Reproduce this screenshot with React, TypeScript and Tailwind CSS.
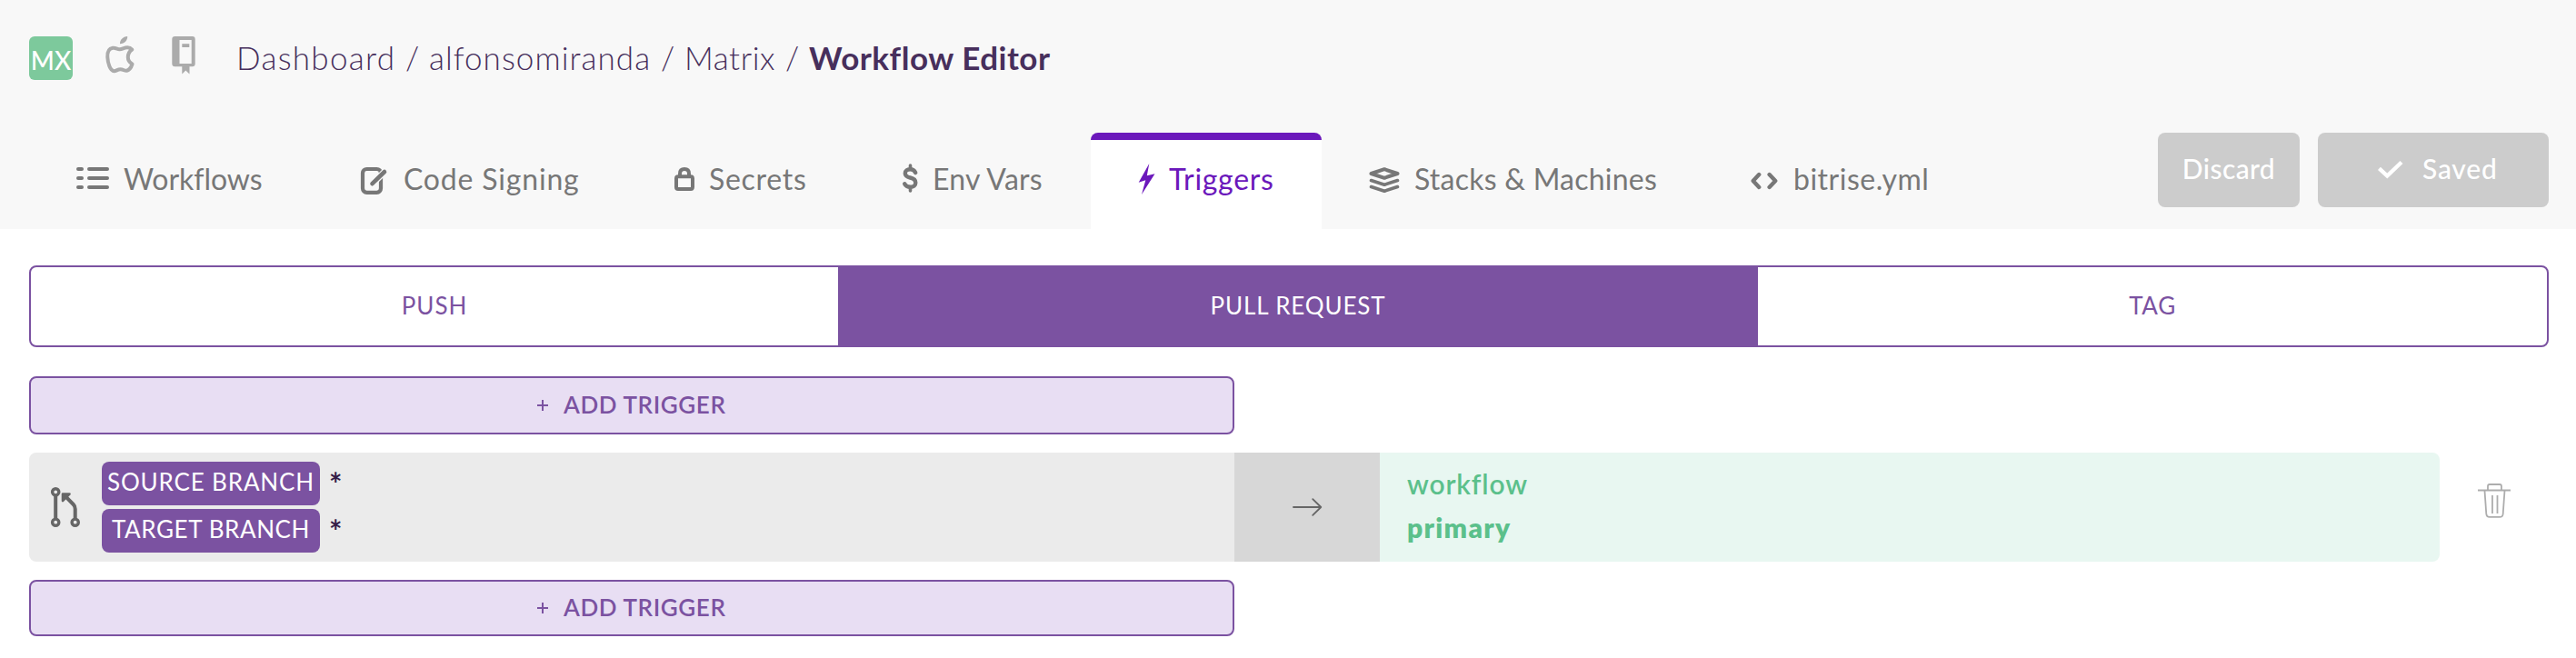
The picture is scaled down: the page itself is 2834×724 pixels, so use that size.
import type { ReactNode } from "react";

function TabIcon({ x, w, className, children }: { x: number; w: number; className: string; children: ReactNode }) {
  return (
    <svg
      viewBox={`${x} 176 ${w} 40`}
      className={"h-[40px] shrink-0 " + className}
      fill="none"
      stroke="currentColor"
      strokeWidth="4"
      strokeLinecap="round"
      strokeLinejoin="round"
    >
      {children}
    </svg>
  );
}

function Tab({ className, active = false, children }: { className: string; active?: boolean; children: ReactNode }) {
  const tone = active ? "rounded-t-lg border-[#6b18bb] bg-white text-[#6b18bb]" : "border-transparent text-[#777]";
  return (
    <a
      className={
        "flex h-[106px] shrink-0 items-center whitespace-nowrap border-t-8 pb-[14px] pl-[52px] text-[32px] leading-[40px] " +
        tone +
        " " +
        className
      }
    >
      {children}
    </a>
  );
}

function AddTrigger({ className }: { className: string }) {
  return (
    <button
      className={
        "flex w-[1326px] items-center rounded-lg border-2 border-[#7b52a1] bg-[#e8def3] pb-[2px] pl-[556px] text-[26px] text-[#7b52a1] " +
        className
      }
    >
      <svg viewBox="0 0 14 14" className="mt-[2px] size-[14px]" stroke="currentColor" strokeWidth="2">
        <path d="M1 7H13M7 1V13" />
      </svg>
      <span className="ml-[16px] font-semibold tracking-[0.6px]">ADD TRIGGER</span>
    </button>
  );
}

function BranchRow({ label, className }: { label: string; className: string }) {
  return (
    <div className="flex h-[48px] items-center">
      <span
        className={
          "flex h-[48px] w-[240px] items-center justify-center rounded-lg bg-[#7b52a1] pb-[3px] text-[26px] text-white " +
          className
        }
      >
        {label}
      </span>
      <span className="ml-[10px] text-[34px] font-bold leading-[48px] text-[#351d48]">*</span>
    </div>
  );
}

export default function App() {
  return (
    <div className="h-[724px] w-[2834px] overflow-hidden bg-white font-['Lato',sans-serif] [font-variant-ligatures:none]">
      <header className="h-[252px] bg-[#f8f8f8]">
        <div className="flex h-[146px] items-start pl-[32px] pt-[40px]">
          <div className="flex size-[48px] items-center justify-center rounded-md bg-[#7dc99c] pt-[3px] text-[28px] font-medium text-white">
            MX
          </div>
          <svg viewBox="112 40 40 48" className="ml-[32px] h-[48px] w-[40px]" fill="none" stroke="#ababab" strokeWidth="4" strokeLinejoin="round">
            <path d="M131.5 54.3C129 54 127 52.4 124 52.8C119.500 53.5 118 58 118.300 63C118.600 69 121 78 125.500 78.200C128 78.300 129 76.300 132.500 76.300C136 76.300 137 78.300 139.500 77.800C142.500 77 144.500 73.500 145.500 70.500C142.500 68.800 140.800 66.500 140.800 63C140.800 59.500 142.300 56.500 145.300 54.500C143.500 52.500 140.500 52 138 52.500C135.500 53 134 54.500 131.500 54.300Z" />
            <path d="M132 48.200C131.800 43.800 135 40.500 140.200 40C140.400 44.300 137 48 132 48.200Z" fill="#ababab" stroke="none" />
          </svg>
          <svg viewBox="184 40 36 48" className="ml-[32px] h-[48px] w-[36px]" fill="#ababab">
            <path
              fillRule="evenodd"
              d="M192.500 40H211.500Q214.700 40 214.700 43.200V70Q214.700 73.200 211.500 73.200H208.500V81.500L204.300 77.500L200.300 81.500V73.200H192.500Q189.300 73.200 189.300 70V43.200Q189.300 40 192.500 40ZM197.500 44V70H210.700V44Z"
            />
            <path d="M200.300 48.200H208.300V52H200.300Z" />
          </svg>
          <nav className="ml-[40px] flex whitespace-nowrap text-[35px] font-light leading-[46px] text-[#472f5c]">
            <span className="w-[186px] tracking-[1.3px]">Dashboard</span>
            <span className="w-[26px]">/</span>
            <span className="w-[255px] tracking-[1.05px]">alfonsomiranda</span>
            <span className="w-[26px]">/</span>
            <span className="w-[111px] tracking-[0.6px]">Matrix</span>
            <span className="w-[26px]">/</span>
            <span className="font-bold tracking-[0.52px]">Workflow Editor</span>
          </nav>
        </div>

        <div className="flex h-[106px] items-start pl-[32px]">
          <Tab className="w-[312px]">
            <TabIcon x={84} w={52} className="w-[52px]">
              <path d="M86 186H90M98 186H118M86 196H90M98 196H118M86 206H90M98 206H118" />
            </TabIcon>
            <span className="pt-[2px] tracking-[-0.04px]">Workflows</span>
          </Tab>
          <Tab className="w-[346px]">
            <TabIcon x={396} w={48} className="w-[48px]">
              <rect x="399" y="186" width="20" height="25.800" rx="4.500" strokeWidth="4.200" />
              <path d="M411.500 200.500L426 186" stroke="#f8f8f8" strokeWidth="7" strokeLinecap="butt" />
              <path d="M409.500 202.200L423 189" strokeWidth="4.600" />
            </TabIcon>
            <span className="pt-[2px] tracking-[0.81px]">Code Signing</span>
          </Tab>
          <Tab className="w-[250px]">
            <TabIcon x={742} w={38} className="w-[38px]">
              <rect x="744" y="194.300" width="18" height="13.700" rx="2" />
              <path d="M748 194V191C748 187.500 750 186 753 186C756 186 758 187.500 758 191V194" />
            </TabIcon>
            <span className="pt-[2px] tracking-[0.72px]">Secrets</span>
          </Tab>
          <Tab className="w-[260px]">
            <TabIcon x={992} w={34} className="w-[34px]">
              <path d="M1001.500 182V186M1001.500 206V210" strokeWidth="3.600" />
              <path d="M1007.200 190C1006 187.500 1004 186.300 1001.300 186.300C998 186.300 995.800 188 995.800 190.700C995.800 193.500 998 194.700 1001.300 195.500C1005 196.400 1007.300 197.800 1007.300 201C1007.300 204 1005 205.800 1001.500 205.800C998.500 205.800 996.300 204.600 995.200 202.300" strokeWidth="4.400" />
            </TabIcon>
            <span className="pt-[2px] tracking-[0.25px]">Env Vars</span>
          </Tab>
          <Tab active className="w-[254px]">
            <TabIcon x={1252} w={34} className="w-[34px]">
              <path d="M1264.300 180L1252.700 200.700L1260.300 198.300L1256 214L1270.500 191.200L1261.800 193.300Z" fill="currentColor" stroke="none" />
            </TabIcon>
            <span className="pt-[2px] tracking-[0.7px]">Triggers</span>
          </Tab>
          <Tab className="w-[420px]">
            <TabIcon x={1506} w={50} className="w-[50px]">
              <path d="M1508.500 191L1523 186.200L1537.500 191L1523 195.800Z" />
              <path d="M1508.500 198.500L1523 203.300L1537.500 198.500M1508.500 205.500L1523 210.300L1537.500 205.500" strokeWidth="3.600" />
            </TabIcon>
            <span className="pt-[2px] tracking-[0.23px]">Stacks &amp; Machines</span>
          </Tab>
          <Tab className="w-[300px]">
            <TabIcon x={1926} w={47} className="w-[47px]">
              <path d="M1935.200 192L1928.700 199L1935.200 206M1946.600 192L1953.200 199L1946.600 206" strokeWidth="4.400" />
            </TabIcon>
            <span className="pt-[2px] tracking-[0.5px]">bitrise.yml</span>
          </Tab>
          <button className="ml-[200px] flex h-[82px] w-[156px] items-center justify-center rounded-lg bg-[#ccc] pb-[3px] text-[30px] font-medium tracking-[0.39px] text-white">
            Discard
          </button>
          <button className="ml-[20px] flex h-[82px] w-[254px] items-center rounded-lg bg-[#ccc] pb-[3px] pl-[64px] text-[30px] font-medium tracking-[0.8px] text-white">
            <svg viewBox="2614 168 32 32" className="mr-[19px] mt-[-2px] size-[32px]" fill="none" stroke="currentColor" strokeWidth="4.400">
              <path d="M2617.500 184.300L2626.300 192.500L2642 177.500" />
            </svg>
            Saved
          </button>
        </div>
      </header>

      <main className="pl-[32px] pt-[40px]">
        <div className="flex h-[90px] w-[2772px] overflow-hidden rounded-lg border-2 border-[#7b52a1] text-[26px] text-[#7b52a1]">
          <div className="flex w-[888px] items-center justify-center pb-[1px] tracking-[0.9px]">PUSH</div>
          <div className="flex w-[1012px] items-center justify-center bg-[#7b52a1] pb-[1px] tracking-[0.85px] text-white">PULL REQUEST</div>
          <div className="flex flex-1 items-center justify-center pb-[1px] tracking-[0.67px]">TAG</div>
        </div>

        <AddTrigger className="mt-[32px] h-[64px]" />

        <div className="mt-[20px] flex h-[120px] items-center">
          <div className="flex h-[120px] w-[1326px] items-center rounded-l-lg bg-[#ebebeb] pl-[22px]">
            <svg viewBox="54 534 36 48" className="h-[48px] w-[36px]" fill="none" stroke="#666" strokeWidth="3.400">
              <circle cx="61.200" cy="541.300" r="3.600" />
              <circle cx="61.200" cy="574.700" r="3.600" />
              <circle cx="82.700" cy="574.700" r="3.600" />
              <path d="M61.200 545V571M82.700 571V560Q82.700 557 80.700 555L72 546.200" strokeWidth="4" />
              <path d="M69 543.500H76.500L69 551Z" fill="#666" strokeWidth="2.600" strokeLinejoin="round" />
            </svg>
            <div className="ml-[22px] flex flex-col gap-[4px]">
              <BranchRow label="SOURCE BRANCH" className="tracking-[0.85px]" />
              <BranchRow label="TARGET BRANCH" className="tracking-[0.6px]" />
            </div>
          </div>
          <div className="flex h-[120px] w-[160px] items-center justify-center bg-[#d7d7d7]">
            <svg viewBox="1420 546 36 24" className="h-[24px] w-[36px]" fill="none" stroke="#666" strokeWidth="1.800" strokeLinecap="round" strokeLinejoin="round">
              <path d="M1423 558H1453.300M1444.200 549.200L1453.300 558L1444.200 566.800" />
            </svg>
          </div>
          <div className="flex h-[120px] w-[1166px] flex-col rounded-r-lg bg-[#e8f7f1] pl-[30px] pt-[10px] text-[30px] leading-[48px] text-[#5bc08b]">
            <span className="font-semibold tracking-[0.85px]">workflow</span>
            <span className="font-extrabold tracking-[1.3px]">primary</span>
          </div>
          <svg viewBox="2724 530 40 42" className="ml-[40px] mt-[-14px] h-[42px] w-[40px]" fill="none" stroke="#adadad" strokeWidth="1.800">
            <path d="M2726 539.500H2762M2737 539V535Q2737 533 2739 533H2750Q2752 533 2752 535V539M2733.500 540L2735.300 565.500Q2735.600 568.900 2739 568.900H2750Q2753.400 568.900 2753.700 565.500L2755.500 540M2742 545V565M2747.500 545V565" />
          </svg>
        </div>

        <AddTrigger className="mt-[20px] h-[62px]" />
      </main>
    </div>
  );
}
